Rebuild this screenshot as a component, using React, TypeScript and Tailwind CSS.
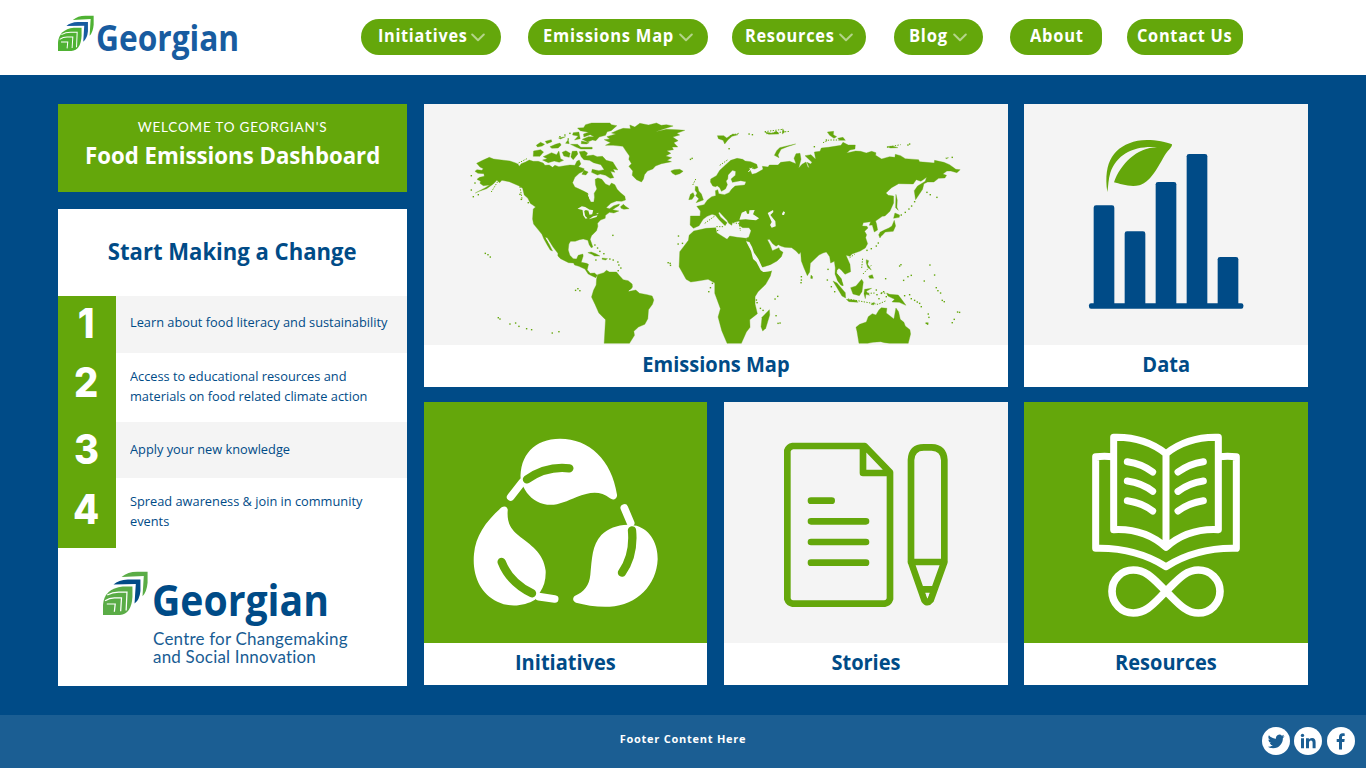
import React from "react";

function LeafMark({ className, green, blue }: { className: string; green: string; blue: string }) {
  return (
    <svg className={className} viewBox="53 45 107 108" preserveAspectRatio="none" aria-hidden="true">
      <path fill={green} d="M97 60Q112 47 134 47H159V74Q157 97 147 107L150 57Z" />
      <path fill={blue} d="M78 78Q90 67 112 66H142V94Q140 116 128 125L131 77Z" />
      <path fill={green} d="M53 153V128Q56 88 100 83H123V108Q121 150 93 153Z" />
      <g fill="none" stroke="#fff" strokeWidth="3">
        <path d="M63 104Q76 97 90 97H110L108 142" />
        <path d="M58 118Q68 111 80 111H97L95 144" />
        <path d="M62 126H82L80 145" />
      </g>
    </svg>
  );
}

const SMALL_ISLANDS: number[][] = [
  [76, 430], [84, 434], [91, 441], [115, 623], [120, 627], [150, 642], [167, 639], [177, 649], [200, 656], [215, 659],
  [277, 669], [297, 665], [347, 541], [354, 536], [360, 542], [459, 376], [625, 458], [632, 466], [631, 460], [656, 378],
  [655, 402], [668, 400], [692, 148], [697, 145], [34, 197], [45, 219], [34, 240], [40, 260], [55, 254], [180, 253],
  [184, 268], [205, 278], [405, 405], [413, 414], [420, 424], [432, 431], [450, 447], [460, 450], [474, 456], [477, 465],
  [483, 474], [475, 482], [315, 75], [300, 80], [330, 70], [325, 87], [408, 450], [758, 520], [752, 533], [747, 545],
  [868, 72], [878, 74], [808, 116], [1064, 110], [1100, 90], [1345, 105], [1350, 102], [1402, 247], [1412, 254], [1432, 262],
  [1365, 275], [1356, 288], [1348, 297], [1337, 307], [1325, 315], [1256, 399], [1250, 408], [1235, 416], [1222, 421],
  [1105, 478], [1025, 500], [1025, 510], [1024, 518], [946, 567], [954, 559], [949, 617], [955, 640], [961, 639],
  [1278, 506], [1320, 468], [1324, 464], [1345, 500], [1355, 496], [1332, 511], [1411, 465], [1425, 495], [1394, 513],
  [1430, 533], [1435, 542], [1443, 549], [1448, 571], [1454, 575], [1406, 612], [1408, 622], [1401, 640], [1404, 642],
  [1478, 638], [1484, 628], [1494, 606], [1500, 607], [1478, 142], [890, 570], [892, 578], [902, 595], [910, 601],
  [1250, 540], [1252, 554], [1258, 566], [1265, 550], [1272, 545], [1280, 560], [1335, 557], [1350, 554], [1355, 566],
  [1365, 571], [1373, 576], [1380, 580], [1385, 590], [1103, 510], [1115, 530], [1125, 545],
];

function WorldMap() {
  return (
    <svg className="block h-[241px] w-full" viewBox="-108 -18 1752 723" preserveAspectRatio="none" role="img" aria-label="World map">
      <g fill="#64a70b" stroke="#64a70b" strokeWidth="1" strokeLinejoin="round">
        <path d="M50 160L68 151 88 142 101 147 125 150 150 153 165 158 174 162 178 169 184 161 197 156 208 150 220 154 235 154 250 159 255 166 268 165 278 172 285 166 297 170 310 168 330 165 345 166 351 154 358 150 363 162 356 170 373 176 371 184 358 190 345 202 338 218 345 231 360 238 371 243 384 250 388 266 393 276 402 276 404 262 403 250 411 237 407 224 406 208 414 204 426 208 437 222 449 227 455 219 465 224 472 238 482 248 495 259 497 270 486 274 470 273 453 280 439 293 449 296 462 287 479 282 477 287 467 293 458 299 477 303 462 309 449 307 437 316 436 325 422 330 413 340 414 349 410 362 395 377 391 388 399 411 394 413 388 404 384 391 370 387 359 389 346 394 332 394 327 402 325 420 330 436 340 446 350 447 355 436 369 432 370 438 364 457 380 460 386 463 382 479 391 490 404 489 412 496 408 503 395 497 385 492 375 477 357 469 344 465 341 459 326 458 302 446 294 438 294 430 280 412 270 396 262 383 258 383 267 401 278 423 271 420 262 405 252 387 246 373 234 358 221 342 218 327 220 297 227 291 211 280 204 265 193 255 188 235 176 227 164 222 148 215 126 211 119 218 111 211 100 222 80 236 57 244 46 249 75 234 89 225 70 227 60 220 62 214 51 208 59 202 73 199 72 191 54 190 45 184 51 179 66 181 70 176 60 171Z" />
        <path d="M432 488L440 481 449 486 470 486 478 496 490 509 505 512 517 522 518 531 509 544 528 540 539 550 562 554 577 558 582 570 578 583 566 599 564 626 555 643 536 651 522 664 524 676 509 700H433L437 629 417 609 406 584 395 561 401 541 409 525 410 508 413 494Z" />
        <path d="M433 89L450 87 441 80 468 72 455 69 475 60 490 55 512 56 510 45 525 51 540 40 566 45 590 39 604 46 620 44 640 48 614 56 587 65 620 58 653 59 675 61 651 70 660 75 639 81 655 92 642 98 654 111 637 111 641 119 621 122 633 130 618 138 636 143 622 151 635 155 605 161 587 168 579 177 563 183 554 194 551 207 545 216 530 209 517 196 519 183 507 169 515 161 507 148 509 138 499 124 489 109 460 106 437 106 452 98Z" />
        <path d="M353 54L371 53 377 44 395 39H450L455 44 471 47 454 62 442 65 437 76 418 81 408 92 398 90 383 96 367 88 386 80 403 80 391 74 372 81 371 72 386 67 361 62ZM340 68L357 66 361 86 344 90 355 78 338 75ZM365 93L388 98 380 102 364 101ZM332 103L353 103 363 112H397L397 117H363L350 112ZM221 123L242 119 251 126 240 139 220 139ZM248 150L262 146 250 140 275 128 290 134 297 123 302 146 311 151 298 157 283 153 265 158ZM307 127L318 122 331 130 328 142 312 138ZM337 124L351 123 354 132 340 149 333 141ZM358 125L374 123 383 129 379 138 400 135 412 140 428 139 439 151 459 156 467 169 474 180 460 177 465 187 452 184 462 203 451 205 437 196 421 192 413 195 395 187 397 178 417 182 433 179 423 164 401 158 389 151 372 149 364 140ZM373 181L385 186 378 195 366 193ZM229 106L242 97 254 103 247 108 233 111ZM256 94L274 89 276 95 261 101ZM270 110L287 103 300 99 304 105 295 114 276 115ZM317 100L325 89 328 101ZM296 84L317 80 302 87Z" />
        <path d="M633 183L643 179 660 178 670 184 660 191 647 195 638 190ZM482 290L491 283 497 289 508 296 492 298 484 295ZM384 428L394 426 408 431 420 438 404 438 396 433ZM427 444L443 446 437 450 427 448ZM707 229L714 230 717 243 725 252 731 270 709 278 717 266 708 257 712 249 706 241ZM692 253L700 248 704 257 697 268 687 269Z" />
        <g transform="translate(720)">
          <path d="M-29 345L-28 318 1 318 2 303-9 289 13 284 23 270 36 260 48 257 47 242 54 239 57 251 74 254 88 248 96 237 106 228 135 225 139 215 123 212 98 217 94 207 107 196 108 184 98 181 85 195 84 207 79 213 83 224 77 237 65 244 60 233 52 227 48 230 39 228 32 216 33 207 50 197 60 181 78 164 93 151 112 145 129 148 136 153 153 155 171 163 174 173 165 177 148 173 157 193 169 190 190 178 188 169 205 171 209 165 235 165 243 157 270 154 289 161 283 145 289 131 301 130 304 148 297 174 307 163 319 156 324 170 329 174 322 157 333 162 337 157 316 137 334 134 348 148 344 126 361 124 365 114 386 112 424 106 430 97 446 105 467 105 466 117 451 120 441 129 468 123 483 124 500 129 516 124 529 128 528 136 546 147 570 140 586 142 587 133 603 137 617 146 657 149 660 155 680 157 704 159 705 151 733 157 750 164 769 178 782 179 772 188 754 183 742 183 730 192 741 196 736 204 717 205 703 216 684 216 673 221 669 238 648 269 644 242 654 228 677 214 681 202 664 214 650 209 641 222 597 221 576 233 559 249 566 256 582 258 582 279 571 304 556 318 548 319 528 333 531 343 534 360 524 366 518 345 509 346 513 335 491 338 488 348 502 349 505 354 495 364 501 374 498 383 504 401 497 414 482 423 457 432 451 439 439 436 451 463 453 485 436 493 424 479 418 475 412 481 411 490 424 507 431 526 424 526 413 510 406 492 407 474 404 454 393 459 390 440 380 426 370 429 358 435 332 460 330 486 323 497 313 474 305 453 303 426 298 433 289 423 276 413 255 412 243 408 236 404 229 409 219 401 209 388 203 389 211 404 218 422 238 413 240 420 250 427 245 440 232 453 212 464 188 472 181 467 161 431 143 398 140 384 147 382 154 362 148 353 129 353 118 346 119 333 98 338 96 346 87 340 82 331 59 306 56 309 62 321 82 338 76 347 58 329 47 316 37 313 22 319 10 328-2 347-19 355Z" />
          <path d="M-18 363L19 355 48 353 51 368 82 388 90 378 112 382 140 385 143 400 165 440 184 478 191 486 216 482 212 498 198 523 175 545 166 560 166 582 173 611 150 629 151 652 140 666 125 700H82L66 662 55 621 62 596 45 550 45 519 25 508-6 513-27 516-41 508-62 470-60 425-34 391-32 376Z" />
          <path d="M209 599L210 615 198 655 189 663 184 650 187 622Z" />
          <path d="M224 136L231 122 240 113 265 107 288 102 263 110 244 118 235 135 238 143ZM53 77L72 77 81 84 99 72 115 74 97 79 85 89 75 102 70 91 56 86ZM195 66L218 70 230 63 238 72 207 73ZM249 56L255 66 248 72ZM383 66L402 64 401 74 411 80 403 85 390 76ZM414 85L430 82 437 91 421 91ZM562 110L578 108 595 113 573 114Z" />
          <path d="M589 253L593 270 592 292 596 301 588 293ZM586 309L600 315 599 322 582 325ZM584 331L588 348 581 364 557 366 548 376 538 374 541 367 554 360 568 354 577 348ZM547 375L541 384 537 374ZM500 449L507 452 504 463 515 480 504 472 500 459ZM507 498L518 494 522 505 510 505ZM334 495L339 500 338 506 333 505ZM400 513L412 519 437 548 438 564 427 558ZM411 490L425 506 430 528 415 514ZM440 568L469 571 475 577 448 575ZM453 533L469 528 486 508 491 516 487 545 479 557 460 552ZM495 538L516 535 500 544 510 556 499 553 497 566 493 551ZM561 549L570 553 596 555 606 568 619 586 599 577 577 576 585 568 565 558ZM514 583L524 577 522 585Z" />
          <path d="M478 700L472 664 469 652 480 643 500 636 506 620 518 611 529 615 538 600 545 593 562 595 560 609 583 627 589 594 597 605 602 628 613 637 617 648 631 659 633 672 626 700H570L555 698 543 695 520 697 504 700Z" />
          <path d="M677 639L686 638 685 643ZM738 144L747 143 740 146Z" />
        </g>
      </g>
      <g transform="translate(720)" fill="#f4f4f4">
        <path d="M119 329L126 308 139 302 142 311 148 311 149 301 165 300 160 313 178 325 169 331 151 329 138 328Z" />
        <path d="M204 309L220 300 221 306 212 315 227 334 228 349 216 353 211 345 216 336ZM247 311L251 304 256 307 253 315 248 315Z" />
        <path d="M139 394L149 396 157 411 163 428 176 447 187 471 190 474 216 465 215 483 191 486 183 481 170 456 160 447 154 423Z" />
      </g>
      <path fill="#f4f4f4" d="M353 296L366 289 376 291 391 300 390 304 378 300 373 303 376 318 383 325 377 326 370 316 368 300ZM384 298L400 301 397 313 389 314ZM387 328L400 319 413 316 410 321ZM409 311L417 308 413 313Z" />
      <g fill="none" stroke="#f4f4f4" strokeWidth="3">
        <path d="M258 383L270 401M385 254L391 267M507 543L522 535" />
        <path d="M866 186L877 173" />
      </g>
      <g fill="none" stroke="#64a70b" strokeWidth="3" strokeDasharray="4 4">
        <path d="M180 230L187 270M94 246L115 212M176 159L203 145M708 207L699 225M735 340L765 318M770 350L790 350M820 338L839 341 842 363M764 364L780 360M780 166L803 150M1090 98L1108 90 1140 90M915 65L970 58M920 71L990 64M1210 492L1235 466M1209 446L1206 476M1165 567L1255 583 1280 572M1225 550L1248 549M1265 548L1280 550M1282 112L1323 104M810 78L840 69M1170 443L1185 433" />
      </g>
      <g fill="#64a70b">
        {SMALL_ISLANDS.map(([x, y]) => (
          <rect key={`${x}-${y}`} x={x - 2} y={y - 2} width="4.2" height="4.2" />
        ))}
      </g>
    </svg>
  );
}

function DataIcon() {
  return (
    <svg className="h-[200px] w-[200px]" viewBox="0 0 600 600" aria-hidden="true">
      <path fill="#64a70b" d="M112 216C99 124 132 78 203 62C236 56 284 63 306 73C307 83 292 90 279 115C250 168 234 187 208 196C180 202 151 192 132 187C151 133 201 82 261 82C193 77 142 101 121 158C115 177 115 198 112 216Z" />
      <g fill="#004b87">
        <rect x="71" y="256" width="62" height="304" rx="7" />
        <rect x="164" y="334" width="62" height="226" rx="7" />
        <rect x="257" y="186" width="62" height="374" rx="7" />
        <rect x="350" y="102" width="62" height="458" rx="7" />
        <rect x="443" y="411" width="62" height="149" rx="7" />
        <rect x="57" y="550" width="463" height="16" rx="6" />
      </g>
    </svg>
  );
}

function InitiativesIcon() {
  return (
    <svg className="h-[200px] w-[220px]" viewBox="0 0 660 600" aria-hidden="true">
      <g fill="#fff">
        <path d="M182 180C178 105 224 56 300 56C388 56 455 119 471 224C472 237 459 242 450 235C420 211 389 216 350 231C315 245 286 261 251 252C223 244 202 226 190 200Z" />
        <path d="M125 262C135 255 145 262 143 273C141 306 150 325 174 345C212 376 250 396 257 452C258 478 252 500 240 517L225 539C195 557 151 564 112 545C61 520 36 466 42 402C47 348 76 305 125 262Z" />
        <path d="M344 528C373 515 388 496 391 464C396 416 396 375 424 345C444 325 471 315 503 314L530 317C573 331 594 373 593 418C590 494 532 557 449 560C415 562 378 556 348 548C338 544 337 534 344 528Z" />
      </g>
      <g fill="none" stroke="#fff" strokeWidth="23" strokeLinecap="round">
        <path d="M152 231L187 186M493 264L512 309M236 530L284 537" />
      </g>
      <g fill="none" stroke="#64a70b" strokeWidth="25" strokeLinecap="round">
        <path d="M201 178Q260 137 328 145M516 331Q523 405 486 458M125 426Q148 486 216 520" />
      </g>
    </svg>
  );
}

function StoriesIcon() {
  return (
    <svg className="h-[200px] w-[220px]" viewBox="0 0 660 600" aria-hidden="true">
      <g fill="none" stroke="#64a70b" strokeWidth="20" strokeLinejoin="round" strokeLinecap="round">
        <path d="M314 78H98Q86 80 82 92V537Q86 549 98 551H374Q386 549 390 537V157ZM309 80V159H386" />
        <path d="M153 242H215M153 304H318M153 366H318M153 428H318" />
        <path d="M453 426V120Q455 82 491 82H515Q551 83 553 120V426ZM453 426L493 540Q502 553 512 540L553 426M484 508H520" />
      </g>
      <path fill="#f4f4f4" d="M497 519H508L502 534Z" />
    </svg>
  );
}

function ResourcesIcon() {
  return (
    <svg className="h-[200px] w-[200px]" viewBox="0 0 600 600" aria-hidden="true">
      <g fill="none" stroke="#fff" strokeWidth="21" strokeLinecap="round" strokeLinejoin="round">
        <path d="M288 101Q222 49 131 52V329Q223 324 288 382Q353 324 445 329V52Q354 49 288 101V380" />
        <path d="M129 110Q104 108 77 110V385Q196 382 288 440Q380 382 499 385V110Q472 108 447 110" />
        <path d="M172 125Q216 131 248 156M172 183Q216 189 248 214M172 242Q216 248 248 273M400 125Q358 131 324 156M400 183Q358 189 324 214M400 242Q358 248 324 273" />
        <path strokeWidth="23" d="M288 514C254 481 231 450 190 450C154 450 126 478 126 514C126 550 154 579 190 579C231 579 254 547 288 514C322 481 346 450 385 450C421 450 450 478 450 514C450 550 421 579 385 579C346 579 322 547 288 514Z" />
      </g>
    </svg>
  );
}

function Pill({ label, box, text, arrow }: { label: string; box: string; text: string; arrow?: boolean }) {
  return (
    <a className={`flex h-9 shrink-0 items-center bg-[#64a70b] ${box}`}>
      <span className={`-mt-[4px] shrink-0 origin-left text-[18px] leading-9 font-bold tracking-[0.8px] whitespace-nowrap text-white ${text}`}>{label}</span>
      {arrow && (
        <svg className="h-[9px] w-[14px] shrink-0" viewBox="0 0 14 9" fill="none" aria-hidden="true">
          <path d="M1.2 1.5L7 7.2L12.8 1.5" stroke="#b4d48a" strokeWidth="2" strokeLinecap="round" strokeLinejoin="round" />
        </svg>
      )}
    </a>
  );
}

function Card({ title, panel, className = "", children }: { title: string; panel: string; className?: string; children: React.ReactNode }) {
  return (
    <section className={`flex h-[283px] flex-col bg-white ${className}`}>
      <div className={`h-[241px] overflow-hidden ${panel}`}>{children}</div>
      <h2 className="flex h-[36px] items-center justify-center text-[22px] font-bold text-[#004b87]">
        <span className="scale-x-[0.91] whitespace-nowrap">{title}</span>
      </h2>
    </section>
  );
}

function Step({ n, row, num, text, children }: { n: number; row: string; num: string; text: string; children: React.ReactNode }) {
  return (
    <li className={`flex ${row}`}>
      <div className={`w-[58px] shrink-0 bg-[#64a70b] pr-[2px] text-center font-[Inter] text-[41px] leading-none font-extrabold text-white ${num}`}>
        <span className="inline-block scale-x-[0.93]">{n}</span>
      </div>
      <div className={`flex items-center pl-[14px] text-[13px] leading-5 text-[#004b87] ${text}`}>
        <div className="origin-left scale-x-[0.984] whitespace-nowrap">{children}</div>
      </div>
    </li>
  );
}

export default function App() {
  return (
    <div className="flex h-[768px] w-[1366px] flex-col overflow-hidden bg-[#004b87] font-['Open_Sans',sans-serif]">
      <header className="flex h-[75px] shrink-0 bg-white">
        <div className="ml-[58px] flex w-[303px] shrink-0 pt-[15px]">
          <LeafMark className="h-9 w-9" green="#4fb233" blue="#185ca0" />
          <span className="ml-[2px] origin-left scale-x-[0.905] text-[35px] leading-[46px] font-bold text-[#185ca0]">Georgian</span>
        </div>
        <nav className="flex pt-[19px]">
          <Pill label="Initiatives" box="w-[140px] rounded-[18px] pl-[17px]" text="w-[93px] scale-x-[0.9]" arrow />
          <Pill label="Emissions Map" box="ml-[27px] w-[180px] rounded-[18px] pl-[15px]" text="w-[136px] scale-x-[0.917]" arrow />
          <Pill label="Resources" box="ml-[24px] w-[134px] rounded-[18px] pl-[13px]" text="w-[94px] scale-x-[0.907]" arrow />
          <Pill label="Blog" box="ml-[27.5px] w-[89.5px] rounded-[18px] pl-[15.5px]" text="w-[44px] scale-x-[0.92]" arrow />
          <Pill label="About" box="ml-[27px] w-[91.5px] rounded-l-[18px] rounded-r-[14px] pl-[20px]" text="scale-x-[0.915]" />
          <Pill label="Contact Us" box="ml-[25.5px] w-[116px] rounded-l-[18px] rounded-r-[15px] pl-[10px]" text="scale-x-[0.905]" />
        </nav>
      </header>

      <main className="flex h-[640px] shrink-0 gap-[17px] pt-[29px] pl-[58px]">
        <aside className="w-[349px] shrink-0">
          <div className="flex h-[88px] flex-col items-center bg-[#64a70b] pt-[14px] text-white">
            <p className="font-[Lato] text-[13.5px] leading-[18px] tracking-[0.8px] whitespace-nowrap">WELCOME TO GEORGIAN'S</p>
            <h1 className="mt-[3px] scale-x-[0.925] text-[24px] leading-[32px] font-bold whitespace-nowrap">Food Emissions Dashboard</h1>
          </div>
          <div className="mt-[17px] h-[477px] bg-white">
            <h2 className="flex h-[87px] items-center justify-center pb-[4px] text-[24px] font-bold text-[#004b87]">
              <span className="scale-x-[0.92] whitespace-nowrap">Start Making a Change</span>
            </h2>
            <ol>
              <Step n={1} row="h-[57px] bg-[#f4f4f4]" num="pt-[7px]" text="pb-[5px]">Learn about food literacy and sustainability</Step>
              <Step n={2} row="h-[69px]" num="pt-[9px]" text="pb-[3px]">Access to educational resources and<br />materials on food related climate action</Step>
              <Step n={3} row="h-[56px] bg-[#f4f4f4]" num="pt-[7px]" text="pb-[2px]">Apply your new knowledge</Step>
              <Step n={4} row="h-[70px]" num="pt-[11px]" text="pb-[4px]">Spread awareness &amp; join in community<br />events</Step>
            </ol>
            <div className="flex pt-[23px] pl-[45px]">
              <LeafMark className="h-[44px] w-[45px]" green="#5aac46" blue="#004b87" />
              <div className="pl-[4px]">
                <p className="h-[59px] origin-left scale-x-[0.9] text-[43.5px] leading-[58px] font-bold whitespace-nowrap text-[#004b87]">Georgian</p>
                <p className="pl-px font-[Lato] text-[17px] leading-[18px] tracking-[0.2px] whitespace-nowrap text-[#185c93]">Centre for Changemaking<br />and Social Innovation</p>
              </div>
            </div>
          </div>
        </aside>

        <div className="grid h-[581px] w-[884px] grid-cols-[283px_284px_284px] gap-x-[16.5px] gap-y-[15px]">
          <Card title="Emissions Map" panel="bg-[#f4f4f4]" className="col-span-2">
            <WorldMap />
          </Card>
          <Card title="Data" panel="bg-[#f4f4f4] pt-[16px] pl-[46px]">
            <DataIcon />
          </Card>
          <Card title="Initiatives" panel="bg-[#64a70b] pt-[18px] pl-[36px]">
            <InitiativesIcon />
          </Card>
          <Card title="Stories" panel="bg-[#f4f4f4] pt-[18px] pl-[36.5px]">
            <StoriesIcon />
          </Card>
          <Card title="Resources" panel="bg-[#64a70b] pt-[18px] pl-[46px]">
            <ResourcesIcon />
          </Card>
        </div>
      </main>

      <footer className="flex h-[53px] shrink-0 items-start bg-[#1b5e93]">
        <div className="w-[1262px] pl-[104px] text-center text-[11px] leading-[48px] font-bold tracking-[0.75px] text-white">Footer Content Here</div>
        <div className="flex gap-[4.3px] pt-[12px]">
          <svg className="h-7 w-7" viewBox="0 0 28 28" aria-label="Twitter">
            <circle cx="14" cy="14" r="14" fill="#fff" />
            <path transform="translate(5.8 6) scale(.7)" fill="#1b5e93" d="M23.95 4.57a10 10 0 0 1-2.82.77 4.96 4.96 0 0 0 2.16-2.72c-.95.55-2 .95-3.13 1.18a4.92 4.92 0 0 0-8.38 4.48C7.69 8.1 4.07 6.13 1.64 3.16a4.92 4.92 0 0 0 1.52 6.57 4.9 4.9 0 0 1-2.23-.61v.06a4.92 4.92 0 0 0 3.95 4.83 5 5 0 0 1-2.21.08 4.94 4.94 0 0 0 4.6 3.42A9.87 9.87 0 0 1 0 19.54a14 14 0 0 0 7.55 2.21c9.05 0 14-7.5 14-13.98 0-.21 0-.42-.02-.63a9.94 9.94 0 0 0 2.42-2.57z" />
          </svg>
          <svg className="h-7 w-7" viewBox="0 0 28 28" aria-label="LinkedIn">
            <circle cx="14" cy="14" r="14" fill="#fff" />
            <path fill="#1b5e93" d="M7 11.2h3v10H7zM12 11.2h2.9v1.4c.5-.9 1.5-1.7 3.1-1.7 2.8 0 3.6 1.8 3.6 4.3v6h-3v-5.4c0-1.4-.3-2.4-1.6-2.4-1.4 0-2 1-2 2.4v5.4h-3z" />
            <circle cx="8.5" cy="8.4" r="1.7" fill="#1b5e93" />
          </svg>
          <svg className="h-7 w-7" viewBox="0 0 28 28" aria-label="Facebook">
            <circle cx="14" cy="14" r="14" fill="#fff" />
            <path fill="#1b5e93" d="M12 22.5v-7.6H9.7v-3H12V10c0-2.5 1.4-3.8 3.7-3.8.9 0 1.7.1 2 .2v2.7h-1.3c-1.1 0-1.4.6-1.4 1.4v1.4h2.7l-.4 3H15v7.6z" />
          </svg>
        </div>
      </footer>
    </div>
  );
}
